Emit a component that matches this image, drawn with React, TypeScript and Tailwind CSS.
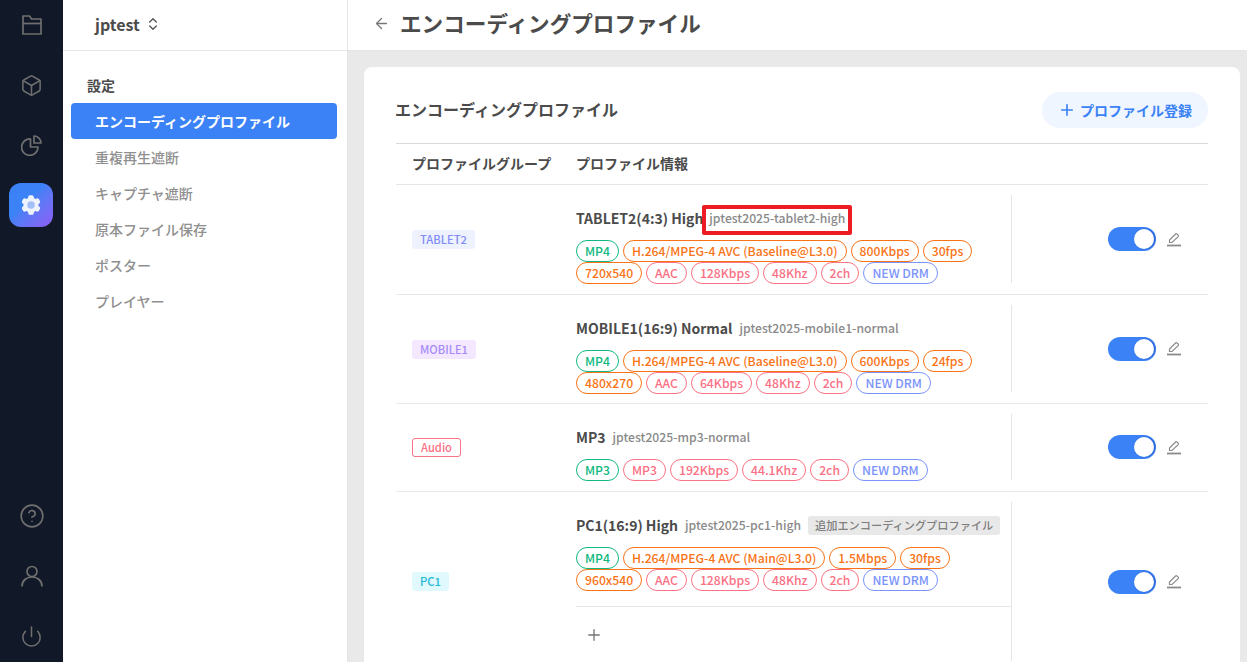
import React from 'react';
import { Box, CircleHelp, Power, ChevronsUpDown, ArrowLeft, Plus } from 'lucide-react';
import { HiCog6Tooth } from 'react-icons/hi2';

type TagColor = 'green' | 'orange' | 'pink' | 'blue';

const tagClass: Record<TagColor, string> = {
  green: 'border-[#10b981] text-[#10b981]',
  orange: 'border-[#f97316] text-[#f97316]',
  pink: 'border-[#fb7185] text-[#fb7185]',
  blue: 'border-[#7b93fb] text-[#7b93fb]',
};

const Tag: React.FC<{ color: TagColor; label: string }> = ({ color, label }) => (
  <span className={`inline-flex h-[22px] items-center whitespace-nowrap rounded-full border px-2 text-[12.2px] font-medium leading-none ${tagClass[color]}`}>
    {label}
  </span>
);

const Toggle = () => (
  <div className="flex h-6 w-12 items-center justify-end rounded-full bg-[#3b82f6] pr-[2px]">
    <div className="h-5 w-5 rounded-full bg-white shadow-[1px_0_2px_rgba(30,64,175,0.6)]" />
  </div>
);

const EditIcon = () => (
  <svg width="16" height="17" viewBox="0 0 16 17" fill="none" stroke="#8a8a8a" className="ml-[10px]">
    <path d="M3.5 11.5 L3.5 9 L9.5 3 Q10.2 2.4 11 3 L12.2 4.2 Q12.8 5 12.2 5.7 L6 11.5 Z" strokeWidth="1.2" />
    <path d="M1 14.5 H15" strokeWidth="1.8" />
  </svg>
);

const FolderIcon = () => (
  <svg width="20" height="20" viewBox="0 0 20 20" fill="none" stroke="currentColor" strokeWidth="1.7" strokeLinejoin="round">
    <path d="M1 1 H7.5 L9.5 4 H19 V19 H1 Z" />
    <path d="M1 8.5 H19" />
  </svg>
);

const PieIcon = () => (
  <svg width="21" height="21" viewBox="0 0 21 21" fill="none" stroke="currentColor" strokeWidth="1.7" strokeLinejoin="round">
    <path d="M9.5 4 A8.2 8.2 0 1 0 17 12 H9.5 Z" />
    <path d="M13 1 A7 7 0 0 1 20 8 H13 Z" />
  </svg>
);

const UserIcon = () => (
  <svg width="22" height="22" viewBox="0 0 22 22" fill="none" stroke="currentColor" strokeWidth="1.7">
    <circle cx="11" cy="6.5" r="5" />
    <path d="M1 21.5 C1 15.5 5.5 12 11 12 C16.5 12 21 15.5 21 21.5" />
  </svg>
);

interface Profile {
  group: string;
  groupClass: string;
  name: string;
  code: string;
  extra?: boolean;
  marked?: boolean;
  line1: [TagColor, string][];
  line2?: [TagColor, string][];
  height: string;
}

const profiles: Profile[] = [
  {
    group: 'TABLET2',
    groupClass: 'bg-[#eef2ff] text-[#818cf8]',
    name: 'TABLET2(4:3) High',
    code: 'jptest2025-tablet2-high',
    marked: true,
    height: 'h-[110px]',
    line1: [['green', 'MP4'], ['orange', 'H.264/MPEG-4 AVC (Baseline@L3.0)'], ['orange', '800Kbps'], ['orange', '30fps']],
    line2: [['orange', '720x540'], ['pink', 'AAC'], ['pink', '128Kbps'], ['pink', '48Khz'], ['pink', '2ch'], ['blue', 'NEW DRM']],
  },
  {
    group: 'MOBILE1',
    groupClass: 'bg-[#f3e8ff] text-[#a78bfa]',
    name: 'MOBILE1(16:9) Normal',
    code: 'jptest2025-mobile1-normal',
    height: 'h-[109px]',
    line1: [['green', 'MP4'], ['orange', 'H.264/MPEG-4 AVC (Baseline@L3.0)'], ['orange', '600Kbps'], ['orange', '24fps']],
    line2: [['orange', '480x270'], ['pink', 'AAC'], ['pink', '64Kbps'], ['pink', '48Khz'], ['pink', '2ch'], ['blue', 'NEW DRM']],
  },
  {
    group: 'Audio',
    groupClass: 'border border-[#fb7185] bg-white text-[#fb7185]',
    name: 'MP3',
    code: 'jptest2025-mp3-normal',
    height: 'h-[88px]',
    line1: [['green', 'MP3'], ['pink', 'MP3'], ['pink', '192Kbps'], ['pink', '44.1Khz'], ['pink', '2ch'], ['blue', 'NEW DRM']],
  },
];

const pc1: Profile = {
  group: 'PC1',
  groupClass: 'bg-[#e0f9fd] text-[#22b8d6]',
  name: 'PC1(16:9) High',
  code: 'jptest2025-pc1-high',
  extra: true,
  height: 'h-[180px]',
  line1: [['green', 'MP4'], ['orange', 'H.264/MPEG-4 AVC (Main@L3.0)'], ['orange', '1.5Mbps'], ['orange', '30fps']],
  line2: [['orange', '960x540'], ['pink', 'AAC'], ['pink', '128Kbps'], ['pink', '48Khz'], ['pink', '2ch'], ['blue', 'NEW DRM']],
};

const ProfileInfo: React.FC<{ p: Profile }> = ({ p }) => (
  <div>
    <div className="flex h-[22px] items-center whitespace-nowrap">
      <span className="text-[14px] font-bold text-[#4b4b4b]">{p.name}</span>
      {p.marked ? (
        <span className="-ml-px mt-1 flex h-[30px] shrink-0 items-center rounded-[2px] border-4 border-[#ed1c24] px-[3px] pb-1 text-[12.2px] font-medium text-[#8a8a8a]">{p.code}</span>
      ) : (
        <span className="ml-[7px] text-[12.2px] font-medium text-[#8a8a8a]">{p.code}</span>
      )}
      {p.extra && (
        <span className="ml-[7px] flex h-[19px] shrink-0 items-center rounded-[3px] bg-[#e8e8e8] px-[7px] text-[11.2px] font-medium text-[#7f7f7f]">追加エンコーディングプロファイル</span>
      )}
    </div>
    <div className="mt-[11px] flex gap-1">
      {p.line1.map(([c, l]) => <Tag key={l + c} color={c} label={l} />)}
    </div>
    {p.line2 && (
      <div className="flex gap-1">
        {p.line2.map(([c, l]) => <Tag key={l + c} color={c} label={l} />)}
      </div>
    )}
  </div>
);

const Controls = () => (
  <div className="flex h-full w-[197px] items-center justify-end border-l border-[#e5e5e5] pr-[26px]">
    <Toggle />
    <EditIcon />
  </div>
);

const App = () => {
  const menu = ['重複再生遮断', 'キャプチャ遮断', '原本ファイル保存', 'ポスター', 'プレイヤー'];
  return (
    <div className="flex h-[662px] w-[1247px] overflow-hidden bg-[#e9e9e9] font-['Noto_Sans_CJK_JP','Noto_Sans',sans-serif]">
      <nav className="flex w-[63px] shrink-0 flex-col items-center justify-between bg-[#111827] text-[#6f6f6f]">
        <div className="flex flex-col items-center">
          <div className="flex h-[50px] items-center"><FolderIcon /></div>
          <div className="mt-[10px] flex h-[50px] items-center"><Box size={23} strokeWidth={1.6} /></div>
          <div className="mt-[10px] flex h-[50px] items-center"><PieIcon /></div>
          <div className="relative mt-[13px] flex h-11 w-11 items-center justify-center rounded-xl bg-gradient-to-br from-[#3b82f6] from-40% to-[#8b5cf6] -translate-x-px">
            <div className="absolute h-3 w-3 rounded-full bg-[#a3bff5]" />
            <HiCog6Tooth size={24} color="#eef3fe" className="relative" />
          </div>
        </div>
        <div className="mb-[-4px] flex flex-col items-center">
          <div className="flex h-[60px] items-center"><CircleHelp size={26} strokeWidth={1.5} /></div>
          <div className="flex h-[60px] items-center"><UserIcon /></div>
          <div className="flex h-[60px] items-center"><Power size={23} strokeWidth={1.6} /></div>
        </div>
      </nav>

      <aside className="w-[285px] shrink-0 border-r border-[#e5e5e5] bg-white">
        <div className="flex h-[51px] items-center border-b border-[#e8e8e8] pb-[3px] pl-8">
          <span className="text-[16px] font-bold text-[#4b4b4b]">jptest</span>
          <ChevronsUpDown size={16} strokeWidth={2} className="ml-[5px] text-[#555]" />
        </div>
        <div className="px-2 pt-[22px]">
          <div className="pl-4 text-[14px] font-bold leading-[24px] text-[#4b4b4b]">設定</div>
          <div className="mt-[6px] flex h-9 w-[266px] items-center rounded-[4px] bg-[#3b82f6] pl-6 text-[14px] font-bold text-white">エンコーディングプロファイル</div>
          {menu.map((m) => (
            <div key={m} className="flex h-9 items-center pl-6 text-[14px] font-medium text-[#8f8f8f]">{m}</div>
          ))}
        </div>
      </aside>

      <main className="min-w-0 flex-1">
        <header className="flex h-[51px] items-center border-b border-[#e5e5e5] bg-white pb-[4px] pl-[25px]">
          <ArrowLeft size={17} strokeWidth={1.8} className="text-[#777]" />
          <h1 className="ml-[10px] text-[21.6px] font-bold text-[#4b4b4b]">エンコーディングプロファイル</h1>
        </header>
        <section className="ml-[16px] mt-[16px] h-[700px] w-[876px] rounded-lg bg-white px-8 pt-[25px]">
          <div className="flex h-[51px] items-start justify-between">
            <h2 className="-ml-px pt-[5px] text-[16px] font-bold text-[#4b4b4b]">エンコーディングプロファイル</h2>
            <button className="flex h-9 w-[166px] items-center justify-center rounded-full bg-[#eff6ff] text-[14px] font-bold text-[#3b82f6]">
              <Plus size={18} strokeWidth={2.2} className="mr-[4px]" />
              プロファイル登録
            </button>
          </div>
          <div className="flex h-[42px] items-center border-y border-[#d9d9d9] border-b-[#e5e5e5] pb-px text-[14px] font-bold text-[#4b4b4b]">
            <div className="w-[180px] pl-4">プロファイルグループ</div>
            <div>プロファイル情報</div>
          </div>
          {profiles.map((p) => (
            <div key={p.group} className={`flex items-center border-b border-[#e8e8e8] ${p.height}`}>
              <div className="flex w-[180px] pl-4">
                <span className={`inline-flex h-[19px] items-center rounded-[3px] px-2 text-[11.2px] font-medium ${p.groupClass}`}>{p.group}</span>
              </div>
              <div className="h-full w-[435px] pt-[22px]"><ProfileInfo p={p} /></div>
              <div className="h-full pb-[11px] pt-[10px]"><Controls /></div>
            </div>
          ))}
          <div className={`flex border-b border-[#e8e8e8] ${pc1.height}`}>
            <div className="flex w-[180px] items-center pl-4">
              <span className={`inline-flex h-[19px] items-center rounded-[3px] px-2 text-[11.2px] font-medium ${pc1.groupClass}`}>{pc1.group}</span>
            </div>
            <div className="w-[435px] pt-[22px]">
              <ProfileInfo p={pc1} />
              <div className="mt-[15px] flex h-[56px] items-center border-t border-[#e8e8e8] pl-[9px]">
                <Plus size={18} strokeWidth={1.8} className="text-[#777]" />
              </div>
            </div>
            <div className="h-full pb-[10px] pt-[10px]"><Controls /></div>
          </div>
        </section>
      </main>
    </div>
  );
};

export default App;
